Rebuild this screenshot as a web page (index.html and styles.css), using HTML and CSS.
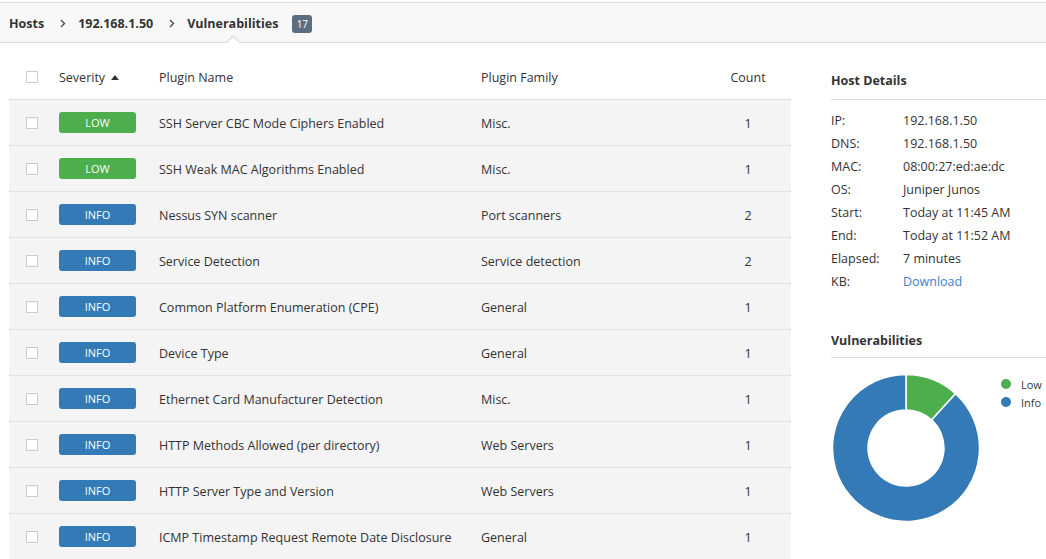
FILE: index.html
```html
<!DOCTYPE html>
<html>
<head>
<meta charset="utf-8">
<link rel="stylesheet" href="styles.css">
</head>
<body>
<div class="topbar">
  <span class="crumb">Hosts</span>
  <svg class="chev" width="6" height="9" viewBox="0 0 6 9"><path d="M1 1 L4.5 4.5 L1 8" fill="none" stroke="#444" stroke-width="1.3"/></svg>
  <span class="crumb">192.168.1.50</span>
  <svg class="chev" width="6" height="9" viewBox="0 0 6 9"><path d="M1 1 L4.5 4.5 L1 8" fill="none" stroke="#444" stroke-width="1.3"/></svg>
  <span class="crumb current">Vulnerabilities</span>
  <span class="count-badge">17</span>
</div>
<div class="main">
  <div class="table">
    <div class="row head">
      <div class="c-check"><span class="box"></span></div>
      <div class="c-sev">Severity <span class="sort"></span></div>
      <div class="c-name">Plugin Name</div>
      <div class="c-fam">Plugin Family</div>
      <div class="c-count">Count</div>
    </div>
    <div class="row"><div class="c-check"><span class="box"></span></div><div class="c-sev"><span class="sev low">LOW</span></div><div class="c-name">SSH Server CBC Mode Ciphers Enabled</div><div class="c-fam">Misc.</div><div class="c-count">1</div></div>
    <div class="row"><div class="c-check"><span class="box"></span></div><div class="c-sev"><span class="sev low">LOW</span></div><div class="c-name">SSH Weak MAC Algorithms Enabled</div><div class="c-fam">Misc.</div><div class="c-count">1</div></div>
    <div class="row"><div class="c-check"><span class="box"></span></div><div class="c-sev"><span class="sev info">INFO</span></div><div class="c-name">Nessus SYN scanner</div><div class="c-fam">Port scanners</div><div class="c-count">2</div></div>
    <div class="row"><div class="c-check"><span class="box"></span></div><div class="c-sev"><span class="sev info">INFO</span></div><div class="c-name">Service Detection</div><div class="c-fam">Service detection</div><div class="c-count">2</div></div>
    <div class="row"><div class="c-check"><span class="box"></span></div><div class="c-sev"><span class="sev info">INFO</span></div><div class="c-name">Common Platform Enumeration (CPE)</div><div class="c-fam">General</div><div class="c-count">1</div></div>
    <div class="row"><div class="c-check"><span class="box"></span></div><div class="c-sev"><span class="sev info">INFO</span></div><div class="c-name">Device Type</div><div class="c-fam">General</div><div class="c-count">1</div></div>
    <div class="row"><div class="c-check"><span class="box"></span></div><div class="c-sev"><span class="sev info">INFO</span></div><div class="c-name">Ethernet Card Manufacturer Detection</div><div class="c-fam">Misc.</div><div class="c-count">1</div></div>
    <div class="row"><div class="c-check"><span class="box"></span></div><div class="c-sev"><span class="sev info">INFO</span></div><div class="c-name">HTTP Methods Allowed (per directory)</div><div class="c-fam">Web Servers</div><div class="c-count">1</div></div>
    <div class="row"><div class="c-check"><span class="box"></span></div><div class="c-sev"><span class="sev info">INFO</span></div><div class="c-name">HTTP Server Type and Version</div><div class="c-fam">Web Servers</div><div class="c-count">1</div></div>
    <div class="row"><div class="c-check"><span class="box"></span></div><div class="c-sev"><span class="sev info">INFO</span></div><div class="c-name">ICMP Timestamp Request Remote Date Disclosure</div><div class="c-fam">General</div><div class="c-count">1</div></div>
  </div>
  <div class="side">
    <h3 class="side-title">Host Details</h3>
    <div class="details">
      <span>IP:</span><span>192.168.1.50</span>
      <span>DNS:</span><span>192.168.1.50</span>
      <span>MAC:</span><span>08:00:27:ed:ae:dc</span>
      <span>OS:</span><span>Juniper Junos</span>
      <span>Start:</span><span>Today at 11:45 AM</span>
      <span>End:</span><span>Today at 11:52 AM</span>
      <span>Elapsed:</span><span>7 minutes</span>
      <span>KB:</span><a class="link">Download</a>
    </div>
    <h3 class="side-title vulns">Vulnerabilities</h3>
    <div class="chart">
      <svg class="donut" width="150" height="150" viewBox="-1 -1 150 150">
        <path d="M74 0.5 A73.5 73.5 0 0 1 123.52 19.68 L99.6 45.92 A38 38 0 0 0 74 36 Z" fill="#4cae4c" stroke="#fff" stroke-width="1.5"/>
        <path d="M123.52 19.68 A73.5 73.5 0 1 1 74 0.5 L74 36 A38 38 0 1 0 99.6 45.92 Z" fill="#337ab7" stroke="#fff" stroke-width="1.5"/>
      </svg>
      <div class="legend">
        <div class="leg"><span class="dot green"></span>Low</div>
        <div class="leg"><span class="dot blue"></span>Info</div>
      </div>
    </div>
  </div>
</div>
</body>
</html>
```
FILE: styles.css
```css
* { box-sizing: border-box; }
body {
  margin: 0;
  font-family: "Open Sans", "Noto Sans", sans-serif;
  font-size: 12.5px;
  color: #333;
  background: #fff;
  overflow: hidden;
}
.topbar {
  margin-top: 2px;
  height: 41px;
  border-top: 1px solid #ddd;
  border-bottom: 1px solid #ddd;
  background: #f8f8f8;
  display: flex;
  align-items: center;
  padding-left: 9px;
  padding-top: 2px;
  position: relative;
}
.crumb {
  font-weight: 700;
  color: #333;
  position: relative;
}
.chev { margin: 0 12px 0 16px; }
.crumb.current::before,
.crumb.current::after {
  content: "";
  position: absolute;
  left: 50%;
  width: 0;
  height: 0;
  border-style: solid;
}
.crumb.current::before {
  bottom: -10px;
  margin-left: -7px;
  border-width: 0 7px 7px 7px;
  border-color: transparent transparent #ddd transparent;
}
.crumb.current::after {
  bottom: -11px;
  margin-left: -6px;
  border-width: 0 6px 6px 6px;
  border-color: transparent transparent #fff transparent;
}
.count-badge {
  margin-left: 14px;
  width: 20px;
  height: 18px;
  border-radius: 3px;
  background: #5b6d80;
  color: #fff;
  font-size: 10px;
  display: flex;
  align-items: center;
  justify-content: center;
}
.main {
  display: flex;
  padding-left: 9px;
}
.table { width: 782px; }
.row {
  display: grid;
  grid-template-columns: 50px 100px 322px 224px 86px;
  align-items: center;
  height: 46px;
  background: #f4f4f4;
  border-bottom: 1px solid #e2e2e2;
}
.row .c-name, .row .c-fam, .row .c-count { padding-top: 2px; }
.row.head {
  height: 57px;
  background: #fff;
  padding-top: 12px;
  border-bottom: 1px solid #ddd;
}
.row.head .c-name, .row.head .c-fam, .row.head .c-count { padding-top: 0; }
.c-check { padding-left: 17px; display: flex; }
.box {
  width: 12px;
  height: 12px;
  border: 1px solid #ccc;
  background: #fff;
  display: block;
}
.c-sev { display: flex; align-items: center; }
.sort {
  display: inline-block;
  width: 0; height: 0;
  margin-left: 6px;
  border-style: solid;
  border-width: 0 4.5px 5px 4.5px;
  border-color: transparent transparent #333 transparent;
}
.sev {
  width: 77px;
  height: 21px;
  border-radius: 3px;
  color: #fff;
  font-size: 11px;
  display: flex;
  align-items: center;
  justify-content: center;
}
.sev.low { background: #4cae4c; }
.sev.info { background: #337ab7; }
.c-count { text-align: center; }
.side {
  margin-left: 40px;
  flex: 1;
}
.side-title {
  margin: 0;
  font-size: 12.5px;
  font-weight: 700;
  height: 57px;
  padding-top: 29px;
  border-bottom: 1px solid #ddd;
}
.side-title.vulns {
  height: auto;
  margin-top: 39px;
  padding-top: 0;
  padding-bottom: 8px;
}
.details {
  display: grid;
  grid-template-columns: 72px 1fr;
  grid-auto-rows: 23px;
  align-items: center;
  margin-top: 9px;
}
.link { color: #3a7fcb; }
.chart {
  display: flex;
  margin-top: 15px;
}
.donut { margin-left: 0; display: block; }
.legend { margin-left: 20px; margin-top: 2px; }
.leg {
  display: flex;
  align-items: center;
  height: 18px;
  font-size: 11px;
}
.dot {
  width: 10px; height: 10px;
  border-radius: 50%;
  margin-right: 10px;
}
.dot.green { background: #4cae4c; }
.dot.blue { background: #337ab7; }
```
